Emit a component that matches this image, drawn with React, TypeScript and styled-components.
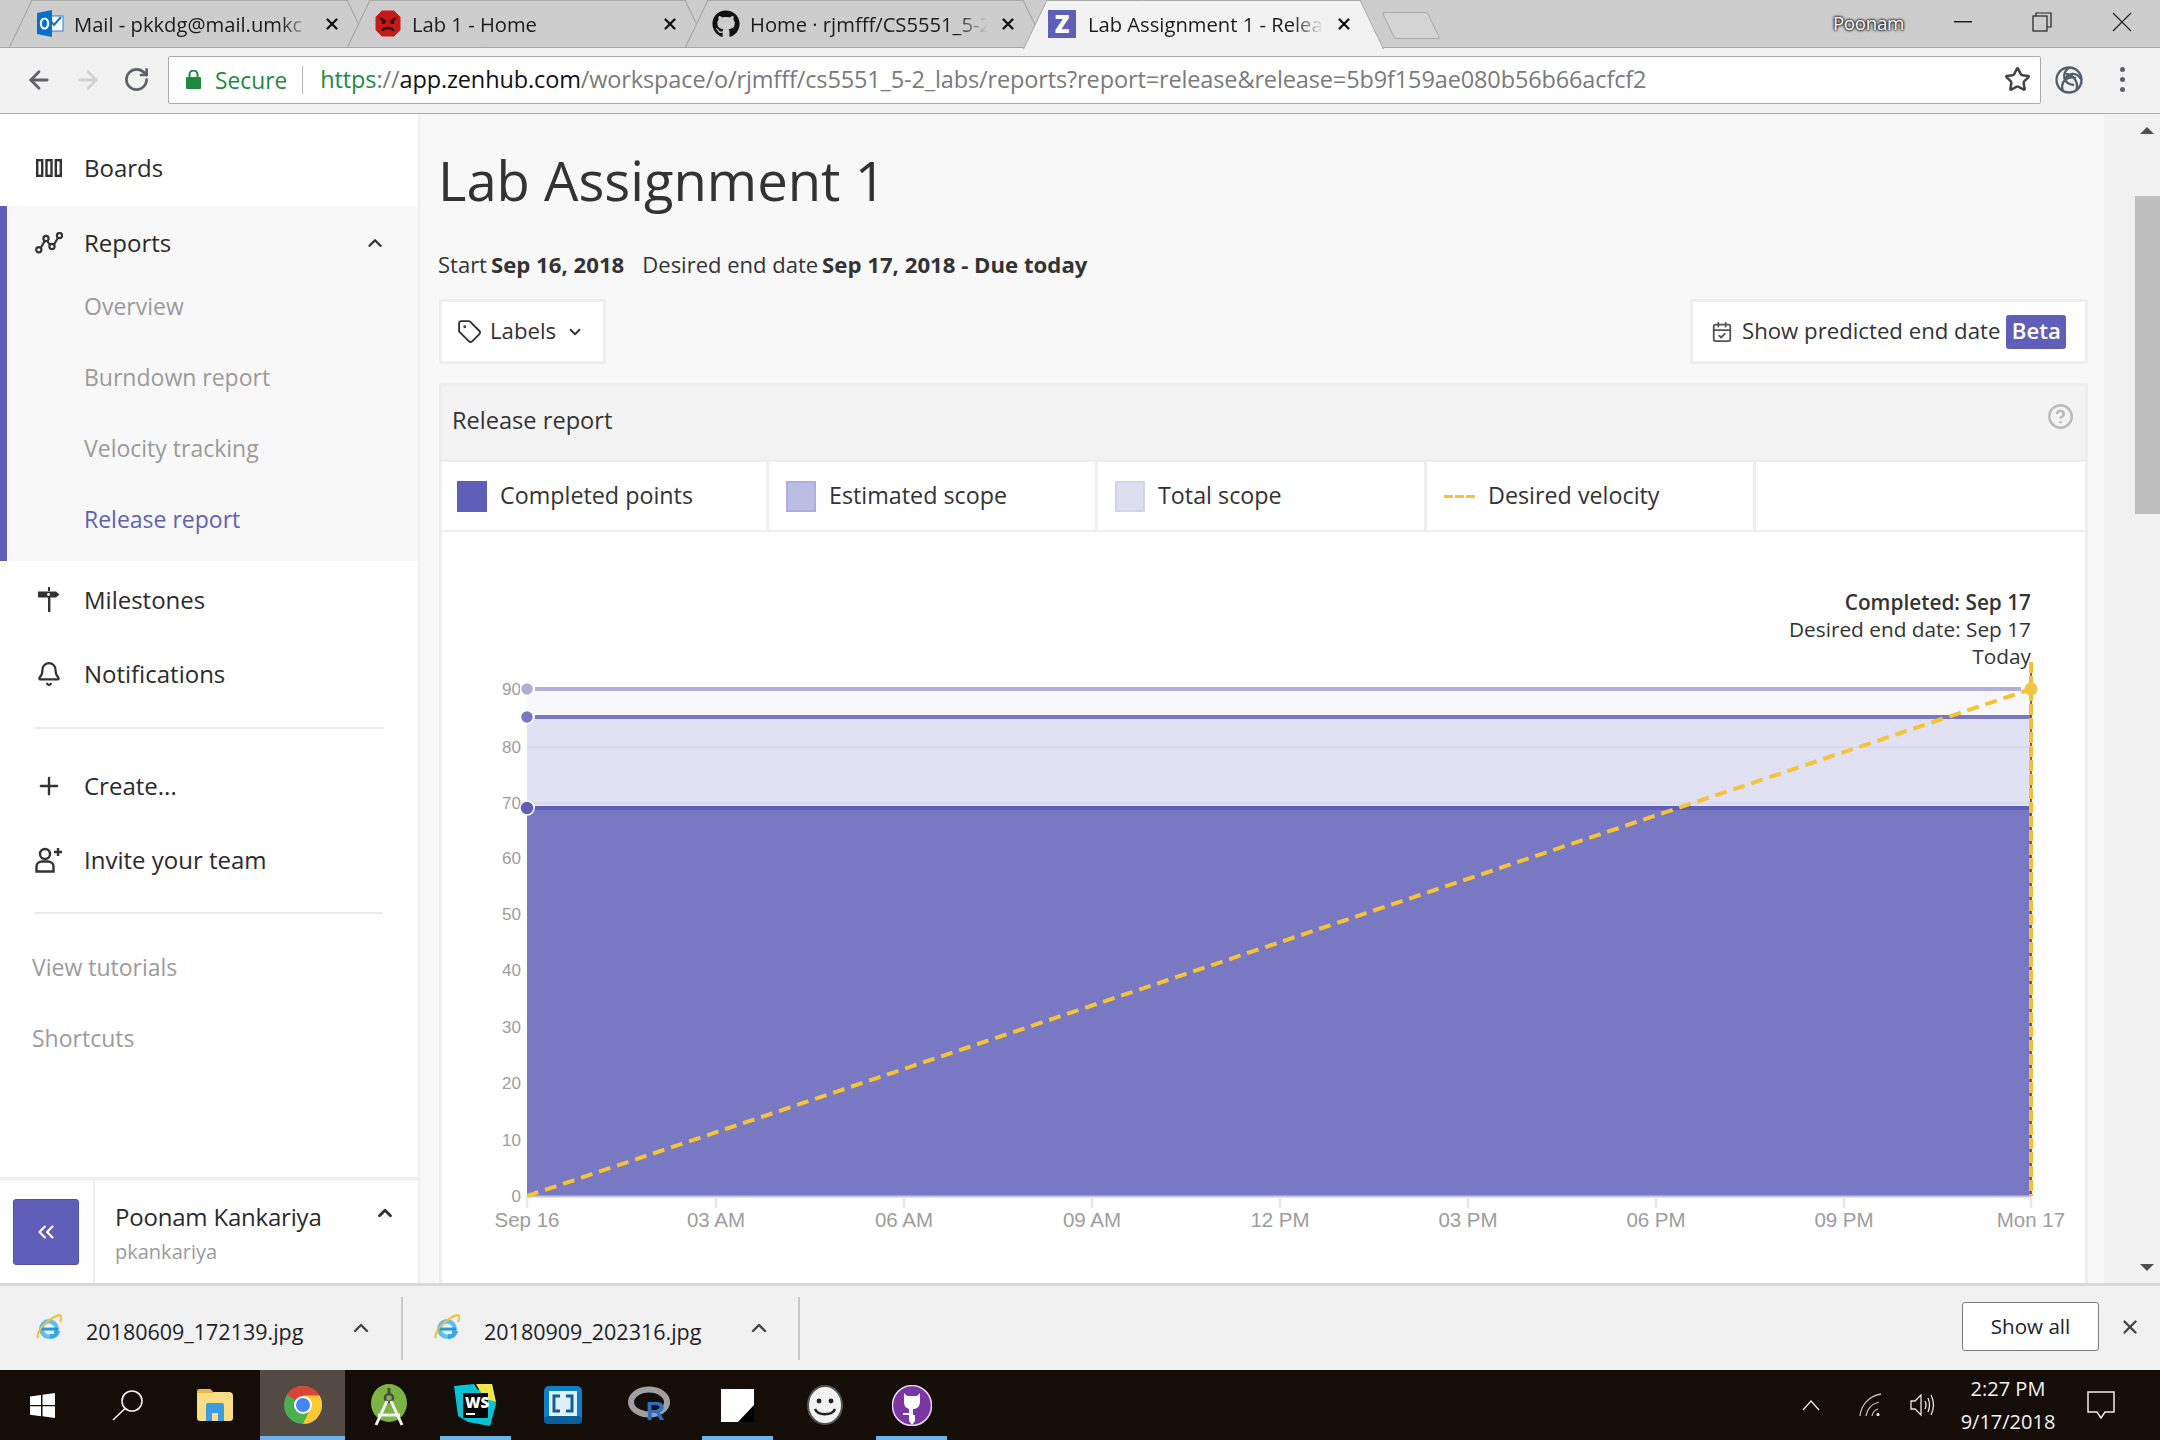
import React from 'react';
import styled, { createGlobalStyle } from 'styled-components';
import { ArrowLeft, ArrowRight, RotateCw, Star, ChevronUp, ChevronDown, Plus, Tag, CalendarCheck, Bell, CircleHelp, X, ChevronsLeft } from 'lucide-react';
import { FaGithub } from 'react-icons/fa';

const Global = createGlobalStyle`
  html, body { margin: 0; padding: 0; background: #fff; }
  * { box-sizing: border-box; }
  body { font-family: "Open Sans", "Noto Sans", sans-serif; color: #2e2e2e; }
`;

const Screen = styled.div`
  width: 2160px; height: 1440px; overflow: hidden;
  display: flex; flex-direction: column;
`;

/* ---------- Browser tabs ---------- */
const TabStrip = styled.div`
  height: 48px; flex: none; display: flex; align-items: flex-start;
  padding-left: 9px; background: #cdcdcd; box-shadow: inset 0 -1px #a6a6a6;
`;
const TabShell = styled.div<{ $active?: boolean }>`
  position: relative; flex: none; width: 361px;
  height: ${p => (p.$active ? 49 : 48)}px;
  margin-right: -23px; padding-left: ${p => (p.$active ? 25 : 27)}px;
  display: flex; align-items: center;
  z-index: ${p => (p.$active ? 3 : 1)};
  padding-bottom: ${p => (p.$active ? 2 : 1)}px;
  &::before, &::after {
    content: ''; position: absolute; top: 0; bottom: ${p => (p.$active ? 0 : 1)}px; width: 60%;
    background: ${p => (p.$active ? '#f2f2f2' : '#cdcdcd')};
    border-top: 1px solid #a9a9a9; z-index: -1;
  }
  &::before { left: 0; transform-origin: bottom left; transform: skewX(-25.6deg); border-left: 1px solid #a0a0a0; }
  &::after { right: 0; transform-origin: bottom right; transform: skewX(25.6deg); border-right: 1px solid #a0a0a0; }
`;
const Favicon = styled.span`
  flex: none; width: 28px; height: 28px; display: flex; align-items: center; justify-content: center;
`;
const TabTitle = styled.span<{ $active?: boolean }>`
  width: ${p => (p.$active ? 238 : 240)}px; margin-left: ${p => (p.$active ? 12 : 10)}px;
  flex: none; overflow: hidden; white-space: nowrap; font-size: 20.2px; color: #1b1b1b;
  -webkit-mask-image: linear-gradient(to right, #000 86%, transparent 99%);
  mask-image: linear-gradient(to right, #000 86%, transparent 99%);
`;
const TabClose = styled.span`
  flex: none; margin-left: 9px; display: flex; width: 18px; justify-content: center; color: #111;
`;
const NewTab = styled.div`
  flex: none; width: 46px; height: 27px; margin: 12px 0 0 27px;
  background: #d4d4d4; border: 1px solid #a9a9a9; border-radius: 3px; transform: skewX(25.6deg);
`;
const WindowArea = styled.div`
  margin-left: auto; display: flex; align-items: center; height: 44px;
`;
const UserName = styled.span`
  font-size: 18.7px; color: #fff; letter-spacing: -0.3px;
  text-shadow: 0 0 2px #000, 0 0 3px #222, 0 0 3px #222;
  margin-right: 39px;
`;
const WinBtn = styled.span<{ $w: number }>`
  width: ${p => p.$w}px; display: flex; justify-content: center; align-items: center;
`;

/* ---------- Address toolbar ---------- */
const Toolbar = styled.div`
  height: 66px; flex: none; display: flex; align-items: center; padding-left: 14px;
  background: #f2f2f2; border-bottom: 1px solid #aaa; padding-bottom: 2px;
`;
const NavBtn = styled.span<{ $off?: boolean }>`
  width: 49px; display: flex; justify-content: center; color: ${p => (p.$off ? '#d2d2d2' : '#5f6368')};
`;
const AddressBar = styled.div`
  width: 1873px; height: 48px; margin-left: 7px; background: #fff; border: 1px solid #ababab;
  border-radius: 2px; display: flex; align-items: center; padding-left: 17px; padding-right: 9px;
`;
const SecureText = styled.span`
  font-size: 22.8px; color: #1e8a3e; margin-left: 14px; padding-top: 1px;
`;
const AddressDivider = styled.span`
  width: 1px; height: 28px; background: #b5b5b5; margin: 0 17px 0 15px;
`;
const Url = styled.span`
  font-size: 23.5px; color: #7a7a7a; white-space: nowrap; flex: 1; letter-spacing: -0.13px; padding-bottom: 2px;
  b { font-weight: 400; color: #1e8a3e; }
  i { font-style: normal; color: #111; }
`;
const ToolbarIcon = styled.span<{ $ml: number }>`
  width: 53px; display: flex; justify-content: center; margin-left: ${p => p.$ml}px;
`;
const Dots = styled.span`
  display: flex; flex-direction: column; gap: 5px; align-items: center;
  span { width: 5px; height: 5px; border-radius: 50%; background: #5f6368; }
`;

/* ---------- Page ---------- */
const Page = styled.div`
  height: 1172px; flex: none; display: flex; background: #f8f8f8;
  border-bottom: 3px solid #d8d8d8;
`;
const Sidebar = styled.aside`
  width: 420px; flex: none; background: #fff; border-right: 2px solid #efefef;
  display: flex; flex-direction: column; padding-top: 17px;
`;
const NavItem = styled.div<{ $h?: number }>`
  height: ${p => p.$h ?? 74}px; flex: none; display: flex; align-items: center;
  padding-left: 35px; font-size: 24px; color: #2b2b2b; line-height: 1;
`;
const NavIcon = styled.span`
  width: 28px; margin-right: 21px; display: flex; justify-content: center; color: #333;
`;
const NavLabel = styled.span`
  padding-bottom: 1px;
`;
const ReportsGroup = styled.div`
  margin-top: 1px; height: 355px; flex: none; background: #f8f8f8;
  border-left: 7px solid #5f5fba; padding-top: 8px; margin-bottom: 2px;
`;
const ReportsHead = styled.div`
  height: 58px; display: flex; align-items: center; padding-left: 28px; padding-right: 32px; font-size: 24px; color: #2b2b2b;
  svg.chev { margin-left: auto; color: #333; }
`;
const SubItem = styled.div<{ $active?: boolean }>`
  height: 71px; display: flex; align-items: center; padding-left: 77px; padding-bottom: 3px; font-size: 23px;
  color: ${p => (p.$active ? '#5f5fba' : '#9b9b9b')};
`;
const Rule = styled.div<{ $top: number; $bottom: number }>`
  height: 2px; flex: none; margin: ${p => p.$top}px 35px ${p => p.$bottom}px; background: #ececec;
`;
const GhostLink = styled.div`
  height: 71px; flex: none; display: flex; align-items: center; padding-left: 32px; padding-bottom: 3px; font-size: 23px; color: #9b9b9b;
`;
const SideFooter = styled.div`
  margin-top: auto; height: 106px; flex: none; border-top: 3px solid #eee; display: flex;
`;
const CollapseCell = styled.div`
  width: 95px; flex: none; border-right: 2px solid #eee; display: flex; align-items: center; justify-content: center; padding-right: 2px;
`;
const CollapseBtn = styled.div`
  width: 66px; height: 66px; background: #5f5fba; border: 1px solid #5050a8; border-radius: 3px;
  display: flex; align-items: center; justify-content: center; color: #fff;
`;
const UserCell = styled.div`
  flex: 1; padding: 19px 22px 0 20px; display: grid; grid-template-columns: 1fr auto; align-content: start;
`;
const FullName = styled.div`
  font-size: 24px; line-height: 36px; color: #2b2b2b; letter-spacing: -0.2px;
`;
const Handle = styled.div`
  grid-column: 1 / 3; font-size: 20px; line-height: 28px; color: #9b9b9b; margin-top: 3px;
`;

/* ---------- Main ---------- */
const Main = styled.main`
  flex: 1; min-width: 0; padding: 0 16px 0 19px; display: flex; flex-direction: column; overflow: hidden;
`;
const Title = styled.h1`
  margin: 30px 0 0 -1px; font-size: 54.4px; line-height: 72px; font-weight: 500; color: #333; white-space: nowrap; flex: none;
`;
const DateLine = styled.div`
  margin: 33px 0 3px -1px; height: 30px; flex: none; font-size: 22px; line-height: 30px; color: #333; white-space: nowrap; display: flex;
  b { font-weight: 700; margin-left: 4px; font-size: 22.2px; }
  span + span { margin-left: 18px; }
`;
const Controls = styled.div`
  margin-top: 17px; height: 65px; flex: none; display: flex; justify-content: space-between;
`;
const Control = styled.div<{ $w: number; $pl: number }>`
  width: ${p => p.$w}px; padding-left: ${p => p.$pl}px; background: #fff; border: 3px solid #eee; border-radius: 3px;
  display: flex; align-items: center; font-size: 22.2px; color: #333; white-space: nowrap;
`;
const Nudge = styled.span<{ $ml: number }>`
  margin-left: ${p => p.$ml}px; padding-bottom: 2px;
`;
const BetaBadge = styled.span`
  margin-left: 6px; width: 60px; height: 34px; background: #5f5fba; color: #fff; border-radius: 3px; padding-bottom: 2px;
  display: flex; align-items: center; justify-content: center; font-size: 22.2px; font-weight: 600;
`;
const Panel = styled.section`
  margin-top: 19px; flex: 1; min-height: 0; display: flex; flex-direction: column;
  border: 3px solid #eee; border-bottom: 0; border-radius: 3px 3px 0 0; background: #fff;
`;
const PanelHead = styled.div`
  height: 73px; flex: none; background: #f3f3f3; display: flex; align-items: center; justify-content: space-between;
  padding: 0 11px 5px 10px; font-size: 23.6px; color: #333;
  svg { color: #bbb; margin-top: -7px; }
`;
const Legend = styled.div`
  height: 73px; flex: none; display: flex; border-top: 3px solid #eee; border-bottom: 2px solid #eee;
`;
const LegendCell = styled.div`
  width: 329px; flex: none; padding-left: 17px; border-right: 3px solid #eee;
  display: flex; align-items: center; font-size: 23.3px; color: #333;
  &:first-child { width: 327px; padding-left: 15px; }
`;
const LegendText = styled.span`
  padding-bottom: 2px;
`;
const Swatch = styled.span<{ $fill: string; $line: string }>`
  width: 30px; height: 31px; margin-right: 13px; background: ${p => p.$fill}; border: 2px solid ${p => p.$line};
`;
const DashSwatch = styled.span`
  width: 31px; height: 3px; margin-right: 13px;
  background: repeating-linear-gradient(to right, #f5c238 0 9px, transparent 9px 11px);
`;
const ChartBox = styled.div`
  flex: 1; min-height: 0; overflow: hidden;
  svg { display: block; }
`;
const Scrollbar = styled.div`
  width: 56px; flex: none; background: #f1f1f1; display: flex; flex-direction: column; align-items: flex-end;
  padding: 13px 0 12px;
`;
const ArrowTri = styled.span<{ $down?: boolean }>`
  width: 0; height: 0; margin-right: 6px; border-left: 7px solid transparent; border-right: 7px solid transparent;
  ${p => (p.$down ? 'border-top: 7px solid #505050; margin-top: auto;' : 'border-bottom: 7px solid #505050;')}
`;
const Thumb = styled.div`
  width: 25px; height: 318px; margin-top: 62px; background: #bebebe;
`;

/* ---------- Downloads ---------- */
const DownloadBar = styled.div`
  height: 84px; flex: none; background: #f1f1f1; display: flex; align-items: center;
`;
const DownloadItem = styled.div<{ $w: number; $pl: number }>`
  width: ${p => p.$w}px; height: 63px; flex: none; padding-left: ${p => p.$pl}px; border-right: 2px solid #c9c9c9;
  display: flex; align-items: center; color: #222;
`;
const FileName = styled.span`
  margin: 6px 0 0 24px; width: 263px; font-size: 21.5px; white-space: nowrap;
`;
const ShowAll = styled.div`
  margin: 0 0 4px auto; width: 137px; height: 49px; background: #fff; border: 1px solid #7a7a7a; border-radius: 3px;
  display: flex; align-items: center; justify-content: center; font-size: 20.6px; font-weight: 500; color: #222;
`;
const BarClose = styled.span`
  width: 61px; margin-bottom: 3px; display: flex; justify-content: center; color: #444;
`;

/* ---------- Task bar ---------- */
const Taskbar = styled.div`
  height: 70px; flex: none; display: flex; align-items: center; background: #150e08; color: #fff; padding-left: 0;
`;
const TaskSlot = styled.div<{ $on?: boolean; $active?: boolean; $w?: number }>`
  position: relative; flex: none; width: ${p => p.$w ?? 87.2}px; height: 70px; display: flex; align-items: center; justify-content: center;
  background: ${p => (p.$active ? '#534a43' : 'transparent')};
  ${p => (p.$on ? `&::after { content: ''; position: absolute; bottom: 0; left: 8px; right: 8px; height: 4px; background: #6db3ea; }` : '')}
  ${p => (p.$active ? `&::after { left: 0; right: 0; }` : '')}
`;
const Tray = styled.div`
  margin-left: auto; display: flex; align-items: center; padding-right: 38px;
`;
const TrayBox = styled.span<{ $w: number; $ml: number }>`
  width: ${p => p.$w}px; margin-left: ${p => p.$ml}px; display: flex; justify-content: center; align-items: center;
`;
const Clock = styled.div`
  width: 120px; margin-left: 5px; text-align: center; font-size: 20px; line-height: 33px; color: #f2f2f2;
`;

/* ---------- Drawings ---------- */
const OutlookIcon = () => (
  <svg width="27" height="27" viewBox="0 0 27 27">
    <rect x="11" y="6" width="15" height="15" fill="#fff" stroke="#2a7cd0" />
    <path d="M13 10l4 5 7-8" fill="none" stroke="#0a6fc9" strokeWidth="2" />
    <path d="M0 3l15-3v27l-15-3z" fill="#0a6fc9" />
    <ellipse cx="7.5" cy="13.5" rx="3.6" ry="5" fill="none" stroke="#fff" strokeWidth="2.2" />
  </svg>
);
const AngryIcon = () => (
  <svg width="26" height="27" viewBox="0 0 26 27">
    <path d="M7 .5h12l6.500 6.500v13L19 26.500H7L.5 20V7z" fill="#c61a1a" />
    <path d="M5 8l6 4M21 8l-6 4" stroke="#3a0c0c" strokeWidth="2.4" />
    <rect x="7" y="11" width="3" height="3" fill="#3a0c0c" /><rect x="16" y="11" width="3" height="3" fill="#3a0c0c" />
    <path d="M7.5 21c1-4 10-4 11 0" fill="none" stroke="#3a0c0c" strokeWidth="2.4" />
  </svg>
);
const ZBox = styled.span`
  width: 28px; height: 28px; background: #5f5fba; color: #fff; font-size: 24px; font-weight: 800;
  display: flex; align-items: center; justify-content: center; line-height: 1;
`;
const LockIcon = () => (
  <svg width="15" height="19" viewBox="0 0 15 19" fill="#1e8a3e">
    <rect x="0" y="7" width="15" height="12" rx="1" />
    <path d="M3.500 8V4.500a4 4 0 0 1 8 0V8" fill="none" stroke="#1e8a3e" strokeWidth="2" />
  </svg>
);
const BoardsIcon = () => (
  <svg width="26" height="18" viewBox="0 0 26 18" fill="none" stroke="#333" strokeWidth="2.4">
    <rect x="1.2" y="1.2" width="5" height="15.6" /><rect x="10.5" y="1.2" width="5" height="15.6" /><rect x="19.8" y="1.2" width="5" height="15.6" />
  </svg>
);
const ReportsIcon = () => (
  <svg width="28" height="22" viewBox="0 0 28 22" fill="none" stroke="#333" strokeWidth="2.2">
    <path d="M5 17L11 7l6 9 7-12" />
    <circle cx="3.8" cy="17.8" r="2.6" fill="#f8f8f8" /><circle cx="11" cy="6.5" r="2.6" fill="#f8f8f8" />
    <circle cx="17" cy="14.5" r="2.6" fill="#f8f8f8" /><circle cx="24.5" cy="3.6" r="2.6" fill="#f8f8f8" />
  </svg>
);
const MilestoneIcon = () => (
  <svg width="22" height="26" viewBox="0 0 22 26" fill="#333">
    <rect x="10" y="0" width="2" height="4" /><path d="M0 4.5h18l3.5 3-3.5 3H0z" /><rect x="10" y="10" width="2.4" height="15" />
    <circle cx="10.5" cy="7.5" r="1.4" fill="#fff" />
  </svg>
);
const InviteIcon = () => (
  <svg width="28" height="26" viewBox="0 0 28 26" fill="none" stroke="#333" strokeWidth="2.4">
    <circle cx="10" cy="7" r="5" />
    <path d="M1.5 24.5v-5c0-3 2.500-5 5.500-5h6c3 0 5.500 2 5.500 5v5z" />
    <path d="M23 1v8M19 5h8" />
  </svg>
);
const IEIcon = () => (
  <svg width="26" height="28" viewBox="0 0 26 28">
    <circle cx="13" cy="15" r="10" fill="#62bdf0" />
    <circle cx="13" cy="15" r="5.4" fill="#e7f6fd" />
    <rect x="5" y="13.600" width="17" height="3" fill="#2a96d8" />
    <path d="M14 17h10c-1 5-5 8-10 8z" fill="#3aa6e3" />
    <rect x="14" y="17" width="4" height="3" fill="#e7f6fd" />
    <path d="M2 24C-1 18 13 4 23 1c3 0 3 3 1 7" fill="none" stroke="#f0c030" strokeWidth="2" />
  </svg>
);
const WinLogo = () => (
  <svg width="25" height="25" viewBox="0 0 25 25" fill="#fff">
    <path d="M0 3.500l11-1.500v10H0zM12.500 1.800L25 0v12H12.500zM0 13.200h11v10L0 21.700zM12.500 13.200H25V25l-12.500-1.800z" />
  </svg>
);
const SearchGlass = () => (
  <svg width="31" height="31" viewBox="0 0 31 31" fill="none" stroke="#f2f2f2" strokeWidth="1.600">
    <ellipse cx="20" cy="11" rx="10" ry="10" />
    <path d="M13 18.500L1 30" />
  </svg>
);
const FolderIcon = () => (
  <svg width="38" height="34" viewBox="0 0 38 34">
    <path d="M1 5q0-4 4-4h9l3 3h16q4 0 4 4v22q0 3-3 3H4q-3 0-3-3z" fill="#f9dd84" />
    <path d="M1 4q0-3 3-3h10l4 4H1z" fill="#e8b84c" />
    <path d="M10 17q0-2 2-2h14q2 0 2 2v16h-6v-8h-6v8h-6z" fill="#3d9be0" />
  </svg>
);
const ChromeIcon = () => (
  <svg width="38" height="40" viewBox="0 0 38 38">
    <circle cx="19" cy="19" r="19" fill="#4caf50" />
    <path d="M19 0a19 19 0 0 1 16.500 9.500L19 19 3 8.500A19 19 0 0 1 19 0z" fill="#db4437" />
    <path d="M35.500 9.500A19 19 0 0 1 19 38l9-19-9-9.500z" fill="#fcc934" />
    <circle cx="19" cy="19" r="9" fill="#fff" /><circle cx="19" cy="19" r="7" fill="#4285f4" />
  </svg>
);
const AndroidIcon = () => (
  <svg width="38" height="42" viewBox="0 0 38 42">
    <ellipse cx="19" cy="19" rx="18" ry="19" fill="#7cb342" />
    <circle cx="19" cy="14" r="4" fill="none" stroke="#4a4a4a" strokeWidth="2.500" />
    <path d="M19 4v6" stroke="#4a4a4a" strokeWidth="3" />
    <path d="M17 17L6 41M21 17l11 24M8 31h22" stroke="#f2f2f2" strokeWidth="3" fill="none" />
  </svg>
);
const WsText = styled.text`
  font-family: "Open Sans", sans-serif; font-size: 15px; font-weight: 800; fill: #fff;
`;
const WsIcon = () => (
  <svg width="44" height="42" viewBox="0 0 44 42">
    <path d="M0 2l20-2 4 6 14-6 4 20-6 22-22-4-10-6z" fill="#08c2d6" />
    <path d="M22 0l16 0 4 18-12-4z" fill="#f2e64a" />
    <rect x="9" y="9" width="25" height="25" fill="#000" />
    <WsText x="11" y="24">WS</WsText>
    <rect x="12" y="29" width="9" height="2" fill="#fff" />
  </svg>
);
const BracketsIcon = () => (
  <svg width="38" height="38" viewBox="0 0 38 38">
    <rect x="0" y="0" width="38" height="38" rx="5" fill="#0f7fc7" />
    <rect x="0" y="30" width="38" height="8" rx="4" fill="#0a5f9a" />
    <rect x="5" y="5" width="28" height="25" fill="#dff0fb" />
    <path d="M16 10h-6v15h6M22 10h6v15h-6" fill="none" stroke="#0f5f9a" strokeWidth="3" />
  </svg>
);
const RText = styled.text`
  font-family: "Liberation Sans", sans-serif; font-size: 26px; font-weight: 700; fill: #2a70c8;
`;
const RIcon = () => (
  <svg width="44" height="44" viewBox="0 0 44 44">
    <ellipse cx="21" cy="19" rx="18" ry="12.500" fill="none" stroke="#a0a0a0" strokeWidth="6" />
    <RText x="18" y="37">R</RText>
  </svg>
);
const StickyIcon = () => (
  <svg width="33" height="33" viewBox="0 0 33 33">
    <path d="M0 0h33v33H0z" fill="#fff" />
    <path d="M33 16v17H17z" fill="#000" />
  </svg>
);
const SmileIcon = () => (
  <svg width="36" height="40" viewBox="0 0 36 40">
    <ellipse cx="18" cy="20" rx="17" ry="19" fill="#f2f2f2" stroke="#555" strokeWidth="2" />
    <circle cx="12" cy="16" r="2.400" fill="#222" /><circle cx="24" cy="16" r="2.400" fill="#222" />
    <path d="M8 24c3 7 17 7 20 0" fill="none" stroke="#222" strokeWidth="2.400" />
  </svg>
);
const DesktopIcon = () => (
  <svg width="40" height="41" viewBox="0 0 40 41">
    <ellipse cx="20" cy="20.500" rx="19.500" ry="20" fill="#7c35a5" stroke="#e6d8ee" strokeWidth="1.500" />
    <path d="M12 8l3 3h10l3-3v9c0 4-3 7-6 7h-1v6h2v6l-3 4-3-4v-6h-6v-2h6v-4c-3-1-5-3-5-7z" fill="#fff" />
  </svg>
);
const WifiIcon = () => (
  <svg width="24" height="24" viewBox="0 0 24 24" fill="none" stroke="#bbb" strokeWidth="1.300">
    <path d="M1 23C2 12 10 3 22 1M7 23c1-7 6-12 13-14M13 23c.5-3 2.500-6 6-7" /><circle cx="19" cy="21.500" r="1.500" fill="#fff" stroke="none" />
  </svg>
);
const SpeakerIcon = () => (
  <svg width="26" height="24" viewBox="0 0 26 24" fill="none" stroke="#e8e8e8" strokeWidth="1.300">
    <path d="M1 8h4l6-6v20l-6-6H1zM15 8q2 4 0 8M18 5q3 7 0 14M21 2q5 10 0 20" />
  </svg>
);
const SwirlIcon = () => (
  <svg width="28" height="28" viewBox="0 0 28 28" fill="none" stroke="#50606a" strokeWidth="2.300">
    <circle cx="14" cy="14" r="12.500" />
    <path d="M14 1.500C6 8 8 18 19 19M26.500 14C22 5 12 6 9 16M8 25c-3-8 3-16 13-13M21 24.500C24 18 20 9 11 8" />
  </svg>
);

const legend = [
  { fill: '#5f5fba', line: '#5f5fba', label: 'Completed points' },
  { fill: '#bcbde4', line: '#aeaedb', label: 'Estimated scope' },
  { fill: '#dddeef', line: '#d3d4e8', label: 'Total scope' },
];
const nav = ['Overview', 'Burndown report', 'Velocity tracking'];
const yTicks: [string, number][] = [['90', 689], ['80', 747], ['70', 803], ['60', 858], ['50', 914], ['40', 970], ['30', 1027], ['20', 1083], ['10', 1140], ['0', 1196]];
const xTicks: [string, number][] = [['Sep 16', 527], ['03 AM', 716], ['06 AM', 904], ['09 AM', 1092], ['12 PM', 1280], ['03 PM', 1468], ['06 PM', 1656], ['09 PM', 1844], ['Mon 17', 2031]];

const AxisText = styled.text`
  font-family: "Liberation Sans", Arial, sans-serif; fill: #9d9d9d;
`;
const NoteText = styled.text`
  font-family: "Open Sans", sans-serif; font-size: 20.8px; fill: #333; text-anchor: end;
`;

const Chart = () => (
  <svg width="1643" height="754" viewBox="442 532 1643 754">
    <rect x="527" y="689" width="1504" height="28" fill="#f8f8fc" />
    <rect x="527" y="717" width="1504" height="91" fill="#e0e1f2" />
    <path d="M527 747H2031M527 803H2031" stroke="#d5d6ea" strokeWidth="1.500" />
    <rect x="527" y="808" width="1504" height="388" fill="#7879c2" />
    <path d="M527 1196.500H2031" stroke="#c3c4e4" strokeWidth="2" />
    <path d="M535 689H2021" stroke="#b0aedd" strokeWidth="4" />
    <path d="M535 717H2031" stroke="#7879c2" strokeWidth="4" />
    <path d="M535 808H2031" stroke="#5f5fba" strokeWidth="4" />
    {xTicks.map(([t, x]) => (
      <path key={t} d={`M${x} 1197v11`} stroke="#e8e8e8" strokeWidth="2.500" />
    ))}
    {yTicks.map(([t, y]) => (
      <AxisText key={t} x="521" y={y} fontSize="17" textAnchor="end" dominantBaseline="central">{t}</AxisText>
    ))}
    {xTicks.map(([t, x]) => (
      <AxisText key={t} x={x} y="1219" fontSize="20.500" textAnchor="middle" dominantBaseline="central">{t}</AxisText>
    ))}
    <circle cx="527" cy="689" r="6.500" fill="#aeaedb" stroke="#fff" strokeWidth="1.500" />
    <circle cx="527" cy="717" r="6.500" fill="#7879c2" stroke="#fff" strokeWidth="1.500" />
    <circle cx="527" cy="808" r="7" fill="#5f5fba" stroke="#fff" strokeWidth="1.500" />
    <path d="M2031 662V1196" stroke="#34347f" strokeWidth="1.500" />
    <path d="M527 1196L2031 689" stroke="#f5c238" strokeWidth="4" strokeDasharray="12 7" />
    <path d="M2031 662V1196" stroke="#f3bf35" strokeWidth="4" strokeDasharray="11 3" />
    <circle cx="2031" cy="689" r="6.500" fill="#f3c640" />
    <NoteText x="2031" y="602" fontWeight="600" dominantBaseline="central">Completed: Sep 17</NoteText>
    <NoteText x="2031" y="629" dominantBaseline="central">Desired end date: Sep 17</NoteText>
    <NoteText x="2031" y="656" dominantBaseline="central">Today</NoteText>
  </svg>
);

export default function App() {
  return (
    <Screen>
      <Global />
      <TabStrip>
        <TabShell>
          <Favicon><OutlookIcon /></Favicon>
          <TabTitle>Mail - pkkdg@mail.umkc</TabTitle>
          <TabClose><X size={18} strokeWidth={3} /></TabClose>
        </TabShell>
        <TabShell>
          <Favicon><AngryIcon /></Favicon>
          <TabTitle>Lab 1 - Home</TabTitle>
          <TabClose><X size={18} strokeWidth={3} /></TabClose>
        </TabShell>
        <TabShell>
          <Favicon><FaGithub size={28} color="#111" /></Favicon>
          <TabTitle>Home · rjmfff/CS5551_5-2</TabTitle>
          <TabClose><X size={18} strokeWidth={3} /></TabClose>
        </TabShell>
        <TabShell $active>
          <Favicon><ZBox>Z</ZBox></Favicon>
          <TabTitle $active>Lab Assignment 1 - Relea</TabTitle>
          <TabClose><X size={18} strokeWidth={3} /></TabClose>
        </TabShell>
        <NewTab />
        <WindowArea>
          <UserName>Poonam</UserName>
          <WinBtn $w={40}><svg width="18" height="2"><rect width="18" height="1.500" fill="#222" /></svg></WinBtn>
          <WinBtn $w={118}>
            <svg width="20" height="20" viewBox="0 0 20 20" fill="none" stroke="#222" strokeWidth="1.200"><rect x="1" y="4" width="14" height="15" /><path d="M4 4V1h15v14h-4" /></svg>
          </WinBtn>
          <WinBtn $w={42}>
            <svg width="20" height="20" viewBox="0 0 20 20" stroke="#222" strokeWidth="1.200"><path d="M1 1l18 18M19 1L1 19" /></svg>
          </WinBtn>
          <WinBtn $w={17} />
        </WindowArea>
      </TabStrip>

      <Toolbar>
        <NavBtn><ArrowLeft size={28} strokeWidth={2.4} /></NavBtn>
        <NavBtn $off><ArrowRight size={28} strokeWidth={2.4} /></NavBtn>
        <NavBtn><RotateCw size={27} strokeWidth={2.4} /></NavBtn>
        <AddressBar>
          <LockIcon />
          <SecureText>Secure</SecureText>
          <AddressDivider />
          <Url><b>https</b>://<i>app.zenhub.com</i>/workspace/o/rjmfff/cs5551_5-2_labs/reports?report=release&amp;release=5b9f159ae080b56b66acfcf2</Url>
          <Star size={27} color="#444" strokeWidth={2.2} />
        </AddressBar>
        <ToolbarIcon $ml={1}><SwirlIcon /></ToolbarIcon>
        <ToolbarIcon $ml={1}><Dots><span /><span /><span /></Dots></ToolbarIcon>
      </Toolbar>

      <Page>
        <Sidebar>
          <NavItem><NavIcon><BoardsIcon /></NavIcon><NavLabel>Boards</NavLabel></NavItem>
          <ReportsGroup>
            <ReportsHead>
              <NavIcon><ReportsIcon /></NavIcon><NavLabel>Reports</NavLabel>
              <ChevronUp className="chev" size={22} strokeWidth={2.6} />
            </ReportsHead>
            {nav.map(n => <SubItem key={n}>{n}</SubItem>)}
            <SubItem $active>Release report</SubItem>
          </ReportsGroup>
          <NavItem><NavIcon><MilestoneIcon /></NavIcon><NavLabel>Milestones</NavLabel></NavItem>
          <NavItem><NavIcon><Bell size={26} strokeWidth={2} /></NavIcon><NavLabel>Notifications</NavLabel></NavItem>
          <Rule $top={16} $bottom={20} />
          <NavItem><NavIcon><Plus size={30} strokeWidth={2} /></NavIcon><NavLabel>Create...</NavLabel></NavItem>
          <NavItem><NavIcon><InviteIcon /></NavIcon><NavLabel>Invite your team</NavLabel></NavItem>
          <Rule $top={15} $bottom={19} />
          <GhostLink>View tutorials</GhostLink>
          <GhostLink>Shortcuts</GhostLink>
          <SideFooter>
            <CollapseCell><CollapseBtn><ChevronsLeft size={26} strokeWidth={2} /></CollapseBtn></CollapseCell>
            <UserCell>
              <FullName>Poonam Kankariya</FullName>
              <ChevronUp size={22} strokeWidth={3} style={{ marginTop: 3 }} />
              <Handle>pkankariya</Handle>
            </UserCell>
          </SideFooter>
        </Sidebar>

        <Main>
          <Title>Lab Assignment 1</Title>
          <DateLine>
            <span>Start<b>Sep 16, 2018</b></span>
            <span>Desired end date<b>Sep 17, 2018 - Due today</b></span>
          </DateLine>
          <Controls>
            <Control $w={167} $pl={15}>
              <Tag size={25} strokeWidth={1.8} />
              <Nudge $ml={8}>Labels</Nudge>
              <ChevronDown size={18} strokeWidth={2.4} style={{ marginLeft: 10 }} />
            </Control>
            <Control $w={398} $pl={18}>
              <CalendarCheck size={22} strokeWidth={2} color="#555" />
              <Nudge $ml={9}>Show predicted end date</Nudge>
              <BetaBadge>Beta</BetaBadge>
            </Control>
          </Controls>
          <Panel>
            <PanelHead>Release report<CircleHelp size={27} strokeWidth={2.2} /></PanelHead>
            <Legend>
              {legend.map(l => (
                <LegendCell key={l.label}><Swatch $fill={l.fill} $line={l.line} /><LegendText>{l.label}</LegendText></LegendCell>
              ))}
              <LegendCell><DashSwatch /><LegendText>Desired velocity</LegendText></LegendCell>
            </Legend>
            <ChartBox><Chart /></ChartBox>
          </Panel>
        </Main>
        <Scrollbar>
          <ArrowTri />
          <Thumb />
          <ArrowTri $down />
        </Scrollbar>
      </Page>

      <DownloadBar>
        <DownloadItem $w={403} $pl={36}>
          <IEIcon /><FileName>20180609_172139.jpg</FileName><ChevronUp size={24} strokeWidth={2.4} color="#444" />
        </DownloadItem>
        <DownloadItem $w={397} $pl={31}>
          <IEIcon /><FileName>20180909_202316.jpg</FileName><ChevronUp size={24} strokeWidth={2.4} color="#444" />
        </DownloadItem>
        <ShowAll>Show all</ShowAll>
        <BarClose><X size={22} strokeWidth={2.6} /></BarClose>
      </DownloadBar>

      <Taskbar>
        <TaskSlot $w={85}><WinLogo /></TaskSlot>
        <TaskSlot $w={84}><SearchGlass /></TaskSlot>
        <TaskSlot $w={91}><FolderIcon /></TaskSlot>
        <TaskSlot $w={85} $active $on><ChromeIcon /></TaskSlot>
        <TaskSlot><AndroidIcon /></TaskSlot>
        <TaskSlot $on><WsIcon /></TaskSlot>
        <TaskSlot><BracketsIcon /></TaskSlot>
        <TaskSlot><RIcon /></TaskSlot>
        <TaskSlot $on><StickyIcon /></TaskSlot>
        <TaskSlot><SmileIcon /></TaskSlot>
        <TaskSlot $on><DesktopIcon /></TaskSlot>
        <Tray>
          <TrayBox $w={40} $ml={0}><svg width="18" height="12" viewBox="0 0 18 12" fill="none" stroke="#eee" strokeWidth="1.300"><path d="M1 11l8-9 8 9" /></svg></TrayBox>
          <TrayBox $w={40} $ml={20}><WifiIcon /></TrayBox>
          <TrayBox $w={40} $ml={12}><SpeakerIcon /></TrayBox>
          <Clock>2:27 PM<br />9/17/2018</Clock>
          <TrayBox $w={42} $ml={12}>
            <svg width="28" height="28" viewBox="0 0 28 28" fill="none" stroke="#eee" strokeWidth="1.500"><path d="M1 1h26v20H18l-4 6-4-6H1z" /></svg>
          </TrayBox>
        </Tray>
      </Taskbar>
    </Screen>
  );
}
